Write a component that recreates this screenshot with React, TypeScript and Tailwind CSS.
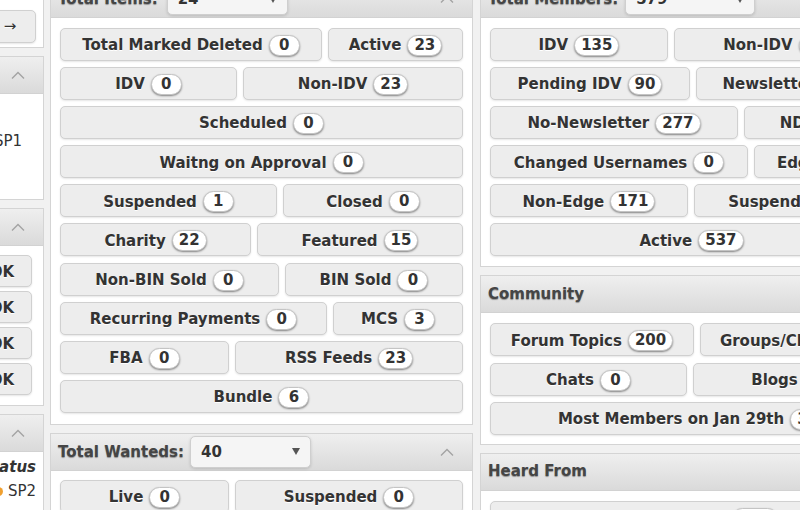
import React from "react";

type Item = { label: string; n: number | string; w?: string };

function Badge({ n }: { n: number | string }) {
  return (
    <span className="ml-[6px] inline-flex h-[21px] min-w-[31px] items-center justify-center rounded-full border border-[#c4c4c4] bg-white px-[6px] text-[15px] font-bold leading-none text-[#333] shadow-[0_1px_2px_rgba(0,0,0,0.45)]">
      {n}
    </span>
  );
}

function Btn({ label, n, w }: Item) {
  return (
    <div
      className={`${w ?? "flex-1"} flex h-[33px] items-center justify-center whitespace-nowrap rounded-[5px] border border-[#d0d0d0] bg-[#ededed] pt-[2px] text-[15px] font-bold text-[#333] shadow-[0_1px_2px_rgba(0,0,0,0.1)] [text-shadow:0_1px_0_#fff]`}
    >
      {label}
      <Badge n={n} />
    </div>
  );
}

function Rows({ rows }: { rows: Item[][] }) {
  return (
    <div className="flex flex-col gap-[6.1px]">
      {rows.map((r, i) => (
        <div key={i} className="flex gap-[6px]">
          {r.map((it, j) => (
            <Btn key={j} {...it} />
          ))}
        </div>
      ))}
    </div>
  );
}

function Chevron() {
  return (
    <svg width="14" height="8" viewBox="0 0 14 8" className="shrink-0">
      <polyline points="1,7.5 7,1.5 13,7.5" fill="none" stroke="#a3a3a3" strokeWidth="1.4" />
    </svg>
  );
}

function Select({ v, cls }: { v: string; cls: string }) {
  return (
    <div
      className={`${cls} flex h-[32px] shrink-0 items-center justify-between rounded-[5px] border border-[#cfcfcf] bg-[#f5f5f5] pl-[10px] pr-[10px] text-[15px] font-bold text-[#333] shadow-[0_1px_3px_rgba(0,0,0,0.15)] [text-shadow:none]`}
    >
      {v}
      <svg width="8" height="7" viewBox="0 0 8 7">
        <path d="M0 0H8L4 7Z" fill="#555" />
      </svg>
    </div>
  );
}

function Header({ children }: { children?: React.ReactNode }) {
  return (
    <div className="flex h-[37px] items-center border-b border-[#d2d2d2] bg-linear-to-b from-[#efefef] to-[#dadada] pl-[7px] pr-[18px] text-[15px] font-bold text-[#454545] [text-shadow:0_1px_1px_rgba(0,0,0,0.35)]">
      {children}
      <div className="ml-auto">
        <Chevron />
      </div>
    </div>
  );
}

function Panel({ children, cls = "" }: { children: React.ReactNode; cls?: string }) {
  return <div className={`border border-[#d4d4d4] bg-white ${cls}`}>{children}</div>;
}

const itemsRows: Item[][] = [
  [
    { label: "Total Marked Deleted", n: 0, w: "w-[262px] shrink-0" },
    { label: "Active", n: 23 },
  ],
  [
    { label: "IDV", n: 0, w: "w-[177px] shrink-0" },
    { label: "Non-IDV", n: 23 },
  ],
  [{ label: "Scheduled", n: 0 }],
  [{ label: "Waitng on Approval", n: 0 }],
  [
    { label: "Suspended", n: 1, w: "w-[217px] shrink-0" },
    { label: "Closed", n: 0 },
  ],
  [
    { label: "Charity", n: 22, w: "w-[191px] shrink-0" },
    { label: "Featured", n: 15 },
  ],
  [
    { label: "Non-BIN Sold", n: 0, w: "w-[219px] shrink-0" },
    { label: "BIN Sold", n: 0 },
  ],
  [
    { label: "Recurring Payments", n: 0, w: "w-[267px] shrink-0" },
    { label: "MCS", n: 3 },
  ],
  [
    { label: "FBA", n: 0, w: "w-[169px] shrink-0" },
    { label: "RSS Feeds", n: 23 },
  ],
  [{ label: "Bundle", n: 6 }],
];

const wantedRows: Item[][] = [
  [
    { label: "Live", n: 0, w: "w-[169px] shrink-0" },
    { label: "Suspended", n: 0 },
  ],
  [
    { label: "Closed", n: 40, w: "w-[169px] shrink-0" },
    { label: "Deleted", n: 0 },
  ],
];

const memberRows: Item[][] = [
  [
    { label: "IDV", n: 135, w: "w-[178px] shrink-0" },
    { label: "Non-IDV", n: 444 },
  ],
  [
    { label: "Pending IDV", n: 90, w: "w-[200px] shrink-0" },
    { label: "Newsletter", n: 302 },
  ],
  [
    { label: "No-Newsletter", n: 277, w: "w-[248px] shrink-0" },
    { label: "NDA", n: 35 },
  ],
  [
    { label: "Changed Usernames", n: 0, w: "w-[258px] shrink-0" },
    { label: "Edge", n: 408 },
  ],
  [
    { label: "Non-Edge", n: 171, w: "w-[198px] shrink-0" },
    { label: "Suspended", n: 4 },
  ],
  [{ label: "Active", n: 537 }],
];

const communityRows: Item[][] = [
  [
    { label: "Forum Topics", n: 200, w: "w-[204px] shrink-0" },
    { label: "Groups/Clubs", n: 12 },
  ],
  [
    { label: "Chats", n: 0, w: "w-[197px] shrink-0" },
    { label: "Blogs", n: 9 },
  ],
  [{ label: "Most Members on Jan 29th", n: 38 }],
];

const heardRows: Item[][] = [[{ label: "Search Engine", n: 111 }]];

function SmallBtn({ children, cls }: { children: React.ReactNode; cls: string }) {
  return (
    <div
      className={`${cls} flex items-center justify-center rounded-[5px] border border-[#d0d0d0] bg-[#ededed] text-[15px] text-[#333] shadow-[0_1px_2px_rgba(0,0,0,0.1)] [text-shadow:0_1px_0_#fff]`}
    >
      {children}
    </div>
  );
}

export default function App() {
  return (
    <div className="h-[510px] w-[800px] overflow-hidden bg-[#f1f1f1] font-['DejaVu_Sans',Verdana,sans-serif]">
      <div className="-mt-[20px] ml-[-256px] flex items-start">
        {/* Left column */}
        <div className="flex w-[300px] shrink-0 flex-col gap-[8px]">
          <Panel cls="flex justify-end pt-[29px] pb-[4px] pr-[7px]">
            <SmallBtn cls="h-[33px] w-[52px] font-normal">→</SmallBtn>
          </Panel>
          <Panel>
            <Header>Filters</Header>
            <div className="flex justify-end pt-[37px] pb-[48px] pr-[21px] text-[15px] leading-[20px] text-[#333]">
              SP1
            </div>
          </Panel>
          <Panel>
            <Header>Actions</Header>
            <div className="flex flex-col items-end gap-[4px] pt-[9px] pb-[10px] pr-[11px]">
              {[0, 1, 2, 3].map((i) => (
                <SmallBtn key={i} cls="h-[32px] w-[60px] pt-[2px] font-bold">
                  OK
                </SmallBtn>
              ))}
            </div>
          </Panel>
          <Panel>
            <Header>Legend</Header>
            <div className="flex flex-col items-end pt-[5px] pb-[20px] pr-[7px] text-[15px] leading-[20px] text-[#333]">
              <div className="font-bold italic">Status</div>
              <div className="mt-[4px] flex items-center">
                <span className="mr-[5px] inline-block h-[9px] w-[9px] rounded-full bg-[#f0a030]" />
                SP2
              </div>
            </div>
          </Panel>
        </div>

        {/* Middle column */}
        <div className="ml-[6px] flex w-[423px] shrink-0 flex-col gap-[8px]">
          <Panel>
            <Header>
              Total Items:
              <Select v="24" cls="ml-[9px] w-[121px]" />
            </Header>
            <div className="px-[9px] pt-[10px] pb-[11px]">
              <Rows rows={itemsRows} />
            </div>
          </Panel>
          <Panel>
            <Header>
              Total Wanteds:
              <Select v="40" cls="ml-[6px] w-[121px]" />
            </Header>
            <div className="px-[9px] pt-[9px] pb-[11px]">
              <Rows rows={wantedRows} />
            </div>
          </Panel>
        </div>

        {/* Right column */}
        <div className="ml-[7px] flex w-[423px] shrink-0 flex-col gap-[8px]">
          <Panel>
            <Header>
              Total Members:
              <Select v="579" cls="ml-[7px] w-[130px]" />
            </Header>
            <div className="px-[9px] pt-[10px] pb-[10px]">
              <Rows rows={memberRows} />
            </div>
          </Panel>
          <Panel>
            <Header>Community</Header>
            <div className="px-[9px] pt-[10px] pb-[9px]">
              <Rows rows={communityRows} />
            </div>
          </Panel>
          <Panel>
            <Header>Heard From</Header>
            <div className="px-[9px] pt-[10px] pb-[10px]">
              <Rows rows={heardRows} />
            </div>
          </Panel>
        </div>
      </div>
    </div>
  );
}
